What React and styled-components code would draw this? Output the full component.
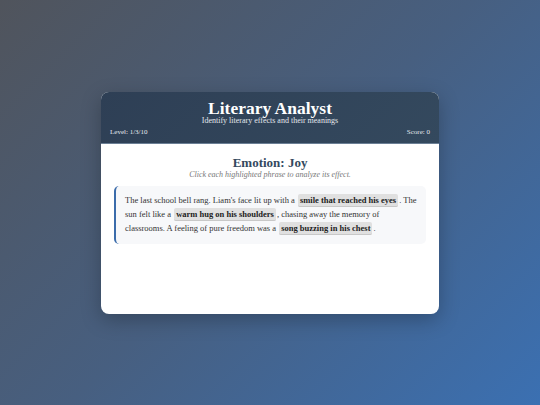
import React from 'react'
import styled, { createGlobalStyle } from 'styled-components'

const GlobalStyle = createGlobalStyle`
  html, body, #root {
    margin: 0;
    height: 100%;
  }
  body {
    font-family: Georgia, 'Liberation Serif', serif;
    background: linear-gradient(135deg, #50545c 0%, #475f80 50%, #3b70b2 100%);
  }
`

const Page = styled.div`
  height: 100%;
  display: flex;
  align-items: center;
  justify-content: center;
`

const Card = styled.div`
  width: 338px;
  min-height: 222px;
  background: #fff;
  border-radius: 8px;
  overflow: hidden;
  box-shadow: 0 6px 20px rgba(0, 0, 0, 0.25);
  display: flex;
  flex-direction: column;
`

const Header = styled.header`
  background: linear-gradient(135deg, #2e3f55, #34495e);
  color: #fff;
  padding: 8px 9px 6px;
  text-align: center;
  border-bottom: 1px solid #6b7f95;
`

const Title = styled.h1`
  margin: 0;
  font-size: 17.5px;
  font-weight: bold;
  line-height: 16px;
`

const Subtitle = styled.p`
  margin: 0;
  font-size: 8px;
  line-height: 9px;
  color: #e2e6eb;
`

const Stats = styled.div`
  display: flex;
  justify-content: space-between;
  margin-top: 3px;
  font-size: 7px;
  line-height: 9px;
  color: #e6ebf0;
`

const Body = styled.main`
  flex: 1;
  padding: 11px 13px 14px;
`

const Emotion = styled.h2`
  margin: 0;
  text-align: center;
  font-size: 13px;
  line-height: 15px;
  color: #34495e;
`

const Hint = styled.p`
  margin: 0;
  text-align: center;
  font-size: 8px;
  line-height: 10px;
  font-style: italic;
  color: #777;
`

const Passage = styled.div`
  margin-top: 6px;
  background: #f7f8fa;
  border-left: 2px solid #3b6cab;
  border-radius: 5px;
  padding: 7px 9px 9px;
  font-size: 8.5px;
  line-height: 14px;
  color: #333;
`

const Phrase = styled.span`
  background: #e0e0e0;
  font-weight: bold;
  color: #222;
  padding: 1px 2px;
  border-radius: 2px;
  border-bottom: 1px solid #c8c8c8;
  margin: 0 1px;
`

export default function App() {
  return (
    <>
      <GlobalStyle />
      <Page>
        <Card>
          <Header>
            <Title>Literary Analyst</Title>
            <Subtitle>Identify literary effects and their meanings</Subtitle>
            <Stats>
              <span>Level: 1/3/10</span>
              <span>Score: 0</span>
            </Stats>
          </Header>
          <Body>
            <Emotion>Emotion: Joy</Emotion>
            <Hint>Click each highlighted phrase to analyze its effect.</Hint>
            <Passage>
              The last school bell rang. Liam's face lit up with a <Phrase>smile that reached his eyes</Phrase>. The sun felt
              like a <Phrase>warm hug on his shoulders</Phrase>, chasing away the memory of classrooms. A feeling of pure
              freedom was a <Phrase>song buzzing in his chest</Phrase>.
            </Passage>
          </Body>
        </Card>
      </Page>
    </>
  )
}
